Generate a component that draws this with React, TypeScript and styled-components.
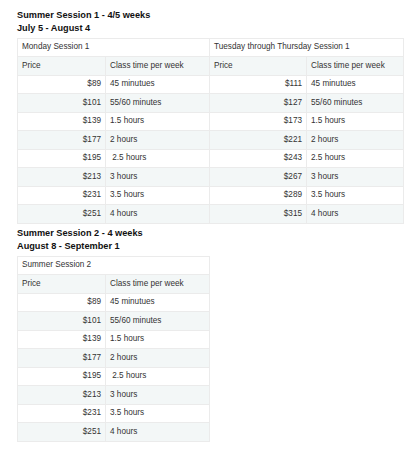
import styled, { createGlobalStyle } from 'styled-components';

const GlobalStyle = createGlobalStyle`
	body {
		margin: 0;
		background: #ffffff;
		font-family: 'Liberation Sans', Helvetica, Arial, sans-serif;
		color: #333333;
	}
`;

const Page = styled.div`
	padding: 9px 8px 0 17px;
`;

const Section = styled.section`
	& + & {
		margin-top: 3.5px;
	}
`;

const Heading = styled.div`
	font-size: 9.2px;
	font-weight: bold;
	line-height: 13px;
	color: #111111;
`;

const Table = styled.table<{ $width: number }>`
	width: ${({ $width }) => $width}px;
	margin-top: 2.5px;
	border-collapse: collapse;
	table-layout: fixed;
	border: 1px solid #dcdcdc;
	font-size: 8.2px;
	color: #333333;
`;

const Row = styled.tr<{ $striped?: boolean }>`
	background: ${({ $striped }) => ($striped ? '#f3f7f7' : '#ffffff')};
`;

const Cell = styled.td<{ $right?: boolean }>`
	height: 17.5px;
	padding: 0 4px 0 4px;
	border: 1px solid #ebebeb;
	text-align: ${({ $right }) => ($right ? 'right' : 'left')};
	white-space: nowrap;
	vertical-align: middle;
	line-height: 10px;
`;

type Price = [string, string];

const monday: Price[] = [
	['$89', '45 minutues'],
	['$101', '55/60 minutes'],
	['$139', '1.5 hours'],
	['$177', '2 hours'],
	['$195', '\u00a02.5 hours'],
	['$213', '3 hours'],
	['$231', '3.5 hours'],
	['$251', '4 hours'],
];

const tuesday: Price[] = [
	['$111', '45 minutues'],
	['$127', '55/60 minutes'],
	['$173', '1.5 hours'],
	['$221', '2 hours'],
	['$243', '2.5 hours'],
	['$267', '3 hours'],
	['$289', '3.5 hours'],
	['$315', '4 hours'],
];

const widths = [88, 104, 97, 97];

export default function App() {
	return (
		<>
			<GlobalStyle />
			<Page>
				<Section>
					<Heading>Summer Session 1 - 4/5 weeks</Heading>
					<Heading>July 5 - August 4</Heading>
					<Table $width={387}>
						<colgroup>
							{widths.map((w, i) => (
								<col key={i} style={{ width: w }} />
							))}
						</colgroup>
						<tbody>
							<Row>
								<Cell colSpan={2}>Monday Session 1</Cell>
								<Cell colSpan={2}>Tuesday through Thursday Session 1</Cell>
							</Row>
							<Row $striped>
								<Cell>Price</Cell>
								<Cell>Class time per week</Cell>
								<Cell>Price</Cell>
								<Cell>Class time per week</Cell>
							</Row>
							{monday.map((row, i) => (
								<Row key={row[0]} $striped={i % 2 === 1}>
									<Cell $right>{row[0]}</Cell>
									<Cell>{row[1]}</Cell>
									<Cell $right>{tuesday[i][0]}</Cell>
									<Cell>{tuesday[i][1]}</Cell>
								</Row>
							))}
						</tbody>
					</Table>
				</Section>
				<Section>
					<Heading>Summer Session 2 - 4 weeks</Heading>
					<Heading>August 8 - September 1</Heading>
					<Table $width={193}>
						<colgroup>
							<col style={{ width: widths[0] }} />
							<col style={{ width: widths[1] }} />
						</colgroup>
						<tbody>
							<Row>
								<Cell colSpan={2}>Summer Session 2</Cell>
							</Row>
							<Row $striped>
								<Cell>Price</Cell>
								<Cell>Class time per week</Cell>
							</Row>
							{monday.map((row, i) => (
								<Row key={row[0]} $striped={i % 2 === 1}>
									<Cell $right>{row[0]}</Cell>
									<Cell>{row[1]}</Cell>
								</Row>
							))}
						</tbody>
					</Table>
				</Section>
			</Page>
		</>
	);
}
